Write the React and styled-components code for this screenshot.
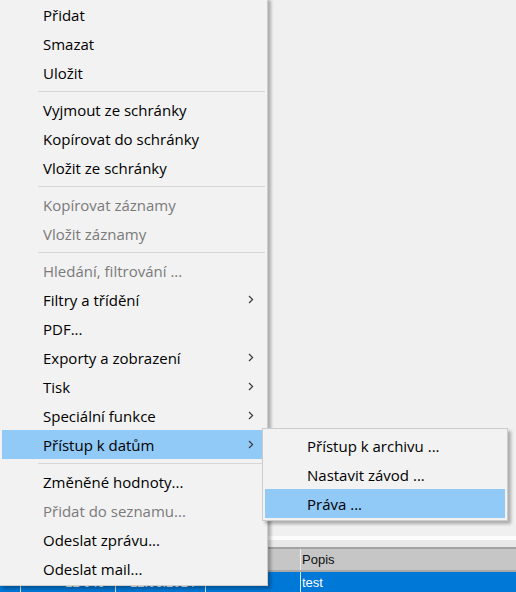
import React from "react";
import styled, { createGlobalStyle } from "styled-components";

const GlobalStyle = createGlobalStyle`
	html, body {
		margin: 0;
		padding: 0;
		background: #f0f0f0;
	}
	body {
		width: 516px;
		height: 592px;
		overflow: hidden;
	}
`;

const mainItems = [
	{ label: "Přidat" },
	{ label: "Smazat" },
	{ label: "Uložit" },
	{ sep: true },
	{ label: "Vyjmout ze schránky" },
	{ label: "Kopírovat do schránky" },
	{ label: "Vložit ze schránky" },
	{ sep: true },
	{ label: "Kopírovat záznamy", disabled: true },
	{ label: "Vložit záznamy", disabled: true },
	{ sep: true },
	{ label: "Hledání, filtrování ...", disabled: true },
	{ label: "Filtry a třídění", sub: true },
	{ label: "PDF..." },
	{ label: "Exporty a zobrazení", sub: true },
	{ label: "Tisk", sub: true },
	{ label: "Speciální funkce", sub: true },
	{ label: "Přístup k datům", sub: true, active: true },
	{ sep: true },
	{ label: "Změněné hodnoty..." },
	{ label: "Přidat do seznamu...", disabled: true },
	{ label: "Odeslat zprávu..." },
	{ label: "Odeslat mail..." },
];

const subItems = [
	{ label: "Přístup k archivu ..." },
	{ label: "Nastavit závod ..." },
	{ label: "Práva ...", active: true },
];

// chevron for items with a submenu
const Arrow = () => (
	<svg width="6" height="9" viewBox="0 0 6 9">
		<polyline points="1,1 4.6,4.5 1,8" fill="none" stroke="#3c3c3c" strokeWidth="1.2" />
	</svg>
);

export default function App() {
	return (
		<Window>
			<GlobalStyle />
			<Workspace />
			<Splitter />
			<Gap />
			<GridHeader>
				<Cell w={20} />
				<Cell w={95} />
				<Cell w={90} />
				<Cell w={95} />
				<Cell>Popis</Cell>
			</GridHeader>
			<GridRow>
				<Cell w={20} />
				<Cell w={95} align="right">12 049</Cell>
				<Cell w={90} align="right">12.06.2014</Cell>
				<Cell w={95} />
				<Cell>test</Cell>
			</GridRow>

			{/* context menu */}
			<Menu>
				{mainItems.map((it, i) =>
					it.sep ? (
						<Separator key={i} />
					) : (
						<Item key={i} active={it.active} disabled={it.disabled}>
							<span>{it.label}</span>
							{it.sub && <Arrow />}
						</Item>
					)
				)}
			</Menu>

			{/* submenu of "Přístup k datům" */}
			<SubMenu>
				{subItems.map((it, i) => (
					<Item key={i} active={it.active} $sub>
						<span>{it.label}</span>
					</Item>
				))}
			</SubMenu>
		</Window>
	);
}

const Window = styled.div`
	position: relative;
	width: 516px;
	height: 592px;
	display: flex;
	flex-direction: column;
	background: #f0f0f0;
	overflow: hidden;
`;

const Workspace = styled.div`
	flex: 1;
`;

const Splitter = styled.div`
	height: 4px;
	background: #fcfcfc;
`;

const Gap = styled.div`
	height: 7px;
	background: #e9e9e9;
`;

const GridHeader = styled.div`
	display: flex;
	height: 21px;
	background: #c6c6c6;
	border-top: 2px solid #a3a3a3;
	border-bottom: 2px solid #a8a8a8;
	font-family: "Liberation Sans", Arial, sans-serif;
	font-size: 13px;
	color: #111;
	& > div + div {
		border-left: 1px solid #ececec;
	}
`;

const GridRow = styled.div`
	display: flex;
	height: 20px;
	background: #0078d7;
	font-family: "Liberation Sans", Arial, sans-serif;
	font-size: 13px;
	color: #fff;
	& > div + div {
		border-left: 1px solid #d6eaf8;
	}
`;

const Cell = styled.div`
	box-sizing: border-box;
	display: flex;
	align-items: center;
	justify-content: ${(p) => (p.align === "right" ? "flex-end" : "flex-start")};
	padding: 0 ${(p) => (p.align === "right" ? "10px" : "1px")};
	width: ${(p) => (p.w ? `${p.w}px` : "auto")};
	flex: ${(p) => (p.w ? "none" : "1")};
	white-space: nowrap;
	overflow: hidden;
`;

const Menu = styled.div`
	position: absolute;
	left: -1px;
	top: -3px;
	width: 263px;
	padding: 2px;
	background: #f2f2f2;
	border: 1px solid #cccccc;
	box-shadow: 3px 3px 3px rgba(0, 0, 0, 0.28);
	font-family: "Open Sans", "Noto Sans", sans-serif;
	font-size: 15px;
`;

const SubMenu = styled(Menu)`
	left: 262px;
	top: 428px;
	width: 240px;
`;

const Item = styled.div`
	height: 29px;
	display: flex;
	align-items: center;
	justify-content: space-between;
	padding: 0 11px 0 ${(p) => (p.$sub ? "42px" : "41px")};
	background: ${(p) => (p.active ? "#91c9f7" : "transparent")};
	color: ${(p) => (p.disabled ? "#7a7a7a" : "#000")};
	white-space: nowrap;
`;

const Separator = styled.div`
	height: 8px;
	display: flex;
	align-items: center;
	&::after {
		content: "";
		flex: 1;
		height: 1px;
		margin-left: 36px;
		background: #d7d7d7;
	}
`;
